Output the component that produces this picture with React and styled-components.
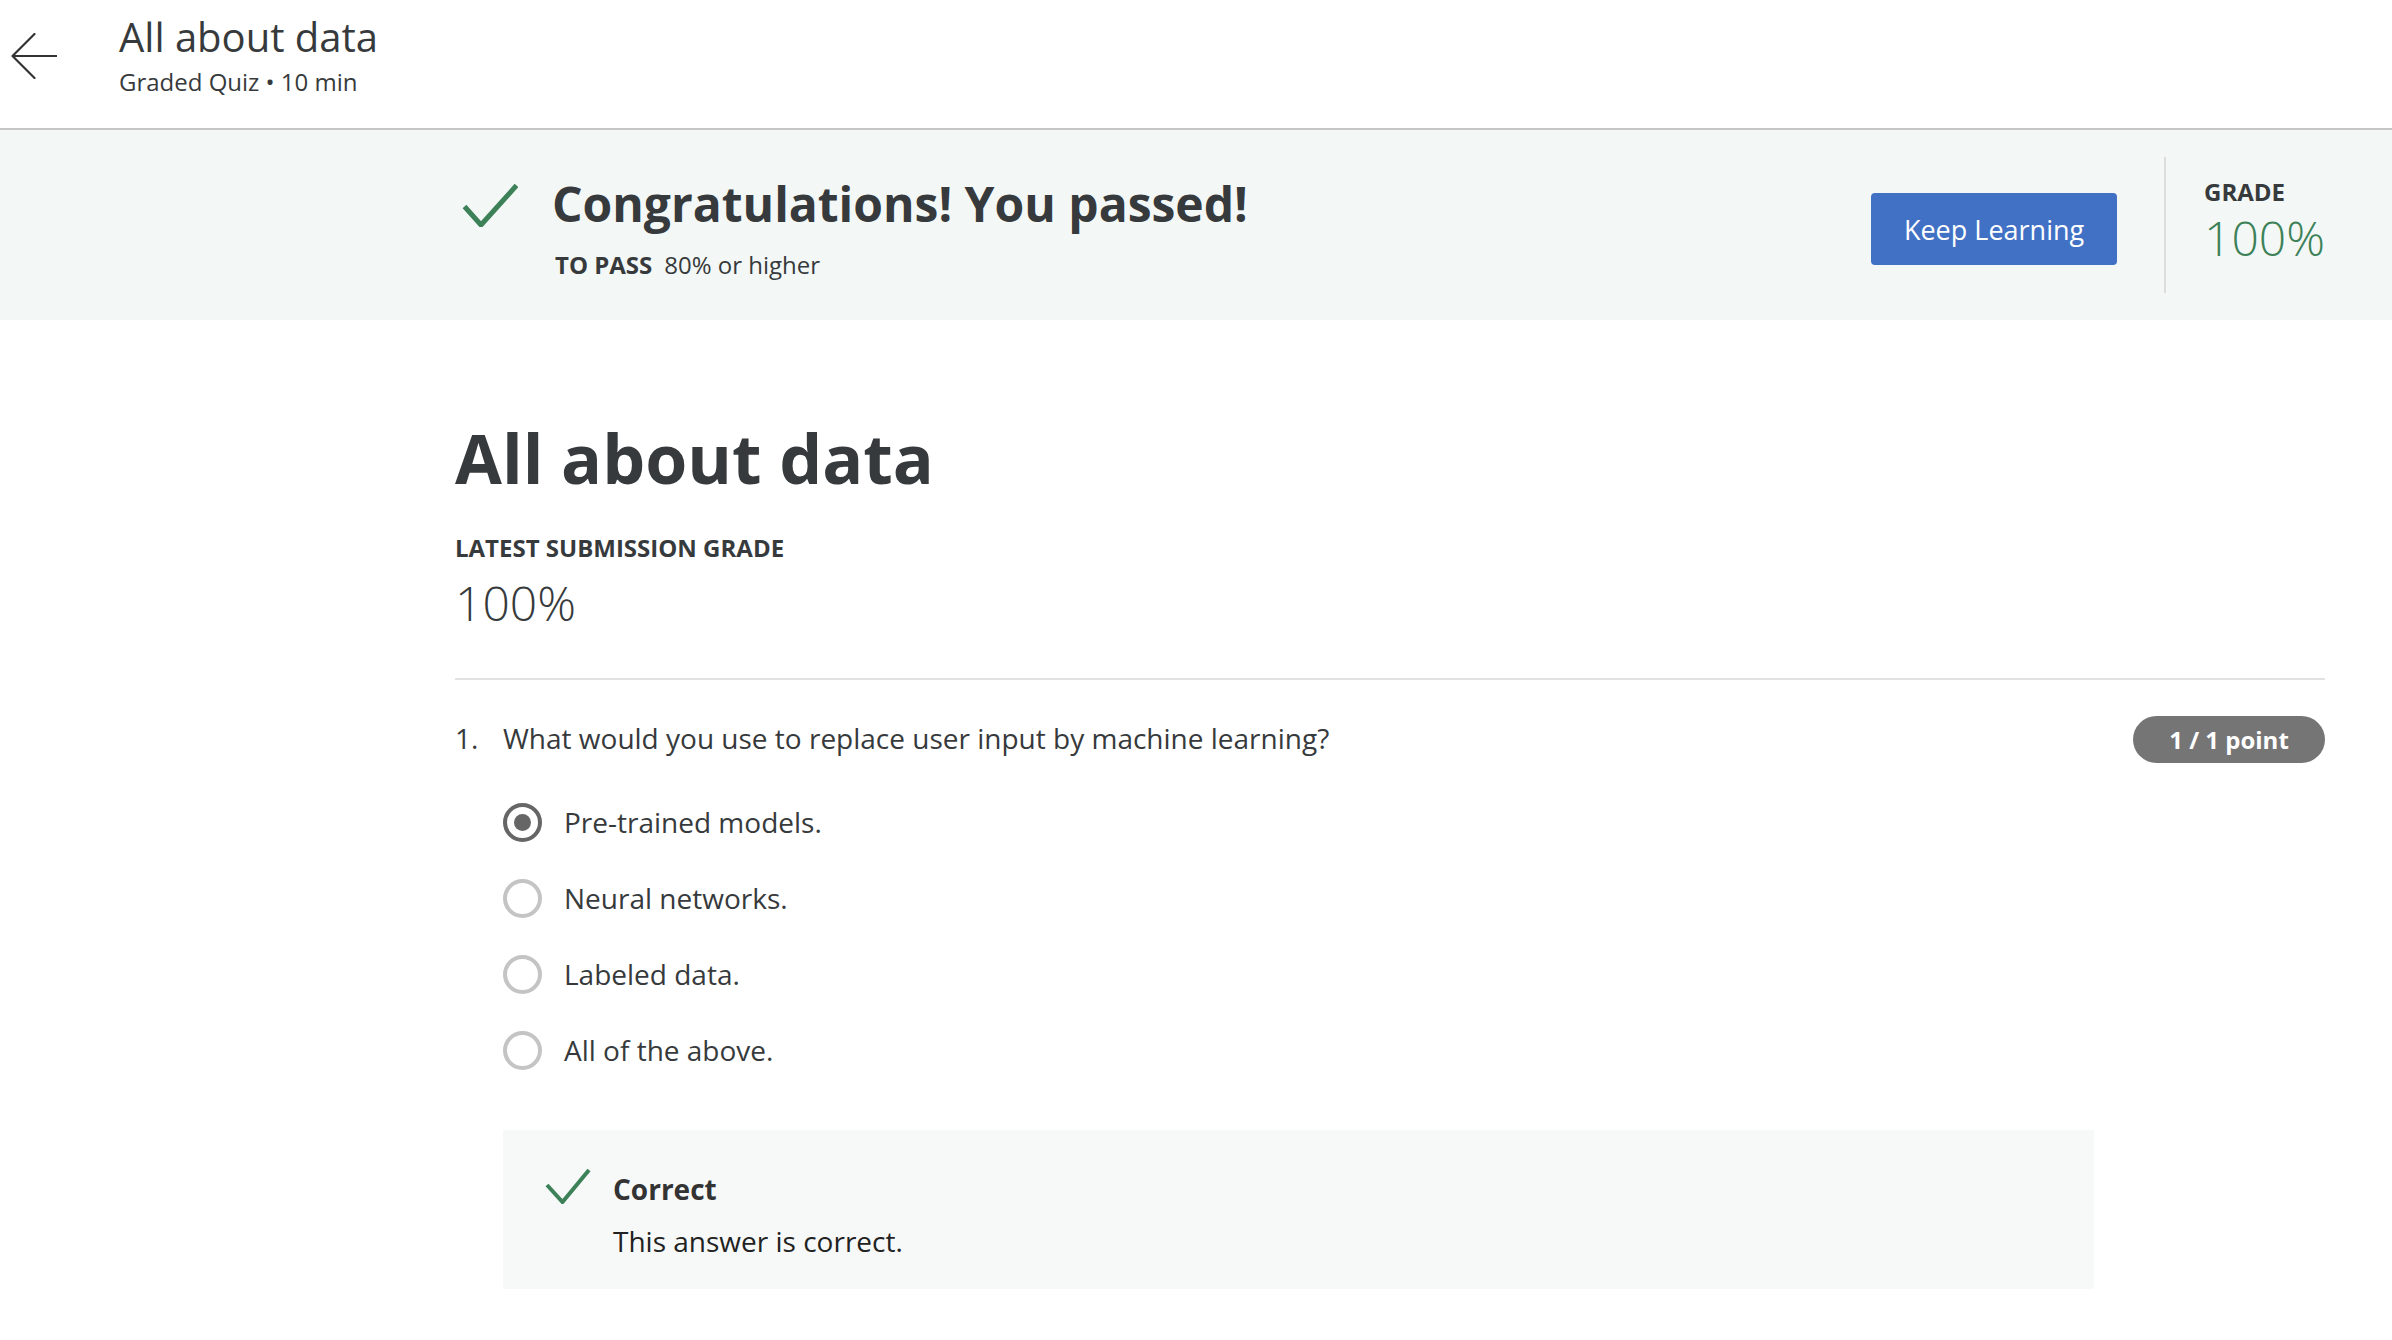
import React from "react";
import styled, { createGlobalStyle } from "styled-components";

const GlobalStyle = createGlobalStyle`
  html, body {
    margin: 0;
    padding: 0;
    background: #ffffff;
  }
  body {
    font-family: "Open Sans", "Noto Sans", "Liberation Sans", sans-serif;
    color: #373a3c;
    -webkit-font-smoothing: antialiased;
  }
  * { box-sizing: border-box; }
`;

const Page = styled.div`
  width: 100%;
  min-height: 1340px;
  background: #fff;
`;

const Header = styled.header`
  height: 130px;
  display: flex;
  align-items: flex-start;
  padding-left: 11px;
  border-bottom: 2px solid #c6c6c6;
`;

const BackButton = styled.button`
  margin-top: 33px;
  width: 46px;
  height: 46px;
  padding: 0;
  border: none;
  background: transparent;
  display: flex;
  cursor: pointer;
`;

const HeaderText = styled.div`
  margin-left: 62px;
  padding-top: 13px;
  display: flex;
  flex-direction: column;
`;

const HeaderTitle = styled.div`
  font-size: 40px;
  line-height: 48px;
  font-weight: 400;
  color: #373a3c;
`;

const HeaderSub = styled.div`
  margin-top: 5px;
  font-size: 24px;
  line-height: 32px;
  color: #373a3c;
`;

const Banner = styled.section`
  height: 190px;
  background: #f3f8f6;
  display: flex;
  align-items: center;
  justify-content: space-between;
  padding: 0 67px 0 455px;
`;

const BannerLeft = styled.div`
  display: flex;
  align-items: flex-start;
`;

const BigCheck = styled.svg`
  margin-top: 13px;
  margin-left: 7px;
  flex: none;
`;

const BannerText = styled.div`
  margin-left: 34px;
  display: flex;
  flex-direction: column;
  padding-top: 4px;
`;

const BannerTitle = styled.div`
  font-size: 48px;
  line-height: 60px;
  font-weight: 700;
  color: #373a3c;
`;

const PassLine = styled.div`
  margin-top: 15px;
  padding-left: 3px;
  font-size: 24px;
  line-height: 32px;
  color: #373a3c;
  display: flex;
  gap: 12px;
`;

const PassLabel = styled.span`
  font-weight: 700;
`;

const BannerRight = styled.div`
  display: flex;
  align-items: center;
`;

const PrimaryButton = styled.button`
  width: 246px;
  height: 72px;
  margin-top: 8px;
  border: none;
  border-radius: 4px;
  background: #4171c5;
  color: #fff;
  font-family: inherit;
  font-size: 27px;
  font-weight: 400;
  cursor: pointer;
`;

const VDivider = styled.div`
  width: 2px;
  height: 136px;
  background: #dcdcdc;
  margin: 0 38px 0 47px;
`;

const GradeBlock = styled.div`
  display: flex;
  flex-direction: column;
  margin-top: -6px;
`;

const SmallCaps = styled.div`
  font-size: 24px;
  line-height: 28px;
  font-weight: 700;
  color: #373a3c;
`;

const BigPercent = styled.div`
  margin-top: ${(p) => p.$mt || "2px"};
  font-size: 48px;
  line-height: ${(p) => p.$lh || "56px"};
  font-weight: 300;
  color: ${(p) => p.$color || "#373a3c"};
`;

const Content = styled.main`
  padding: 94px 67px 0 455px;
`;

const PageTitle = styled.h1`
  margin: 0;
  font-size: 68px;
  line-height: 88px;
  font-weight: 700;
  color: #373a3c;
`;

const SubmissionLabel = styled(SmallCaps)`
  margin-top: 32px;
`;

const Rule = styled.hr`
  margin: 45px 0 0;
  border: none;
  height: 2px;
  background: #e2e2e2;
`;

const QuestionRow = styled.div`
  margin-top: 36px;
  display: flex;
  align-items: center;
  min-height: 47px;
`;

const QNum = styled.div`
  width: 48px;
  flex: none;
  font-size: 28px;
  line-height: 36px;
  margin-top: -4px;
`;

const QText = styled.div`
  flex: 1;
  font-size: 28px;
  line-height: 36px;
  color: #373a3c;
  margin-top: -4px;
`;

const PointPill = styled.div`
  flex: none;
  width: 192px;
  height: 47px;
  border-radius: 24px;
  background: #757575;
  color: #fff;
  font-size: 24px;
  font-weight: 700;
  display: flex;
  align-items: center;
  justify-content: center;
`;

const Options = styled.div`
  margin: 21px 0 0 48px;
  display: flex;
  flex-direction: column;
`;

const OptionRow = styled.label`
  height: 76px;
  display: flex;
  align-items: center;
`;

const Radio = styled.span`
  width: 39px;
  height: 39px;
  flex: none;
  border-radius: 50%;
  border: 4px solid ${(p) => (p.$checked ? "#666666" : "#c4c4c4")};
  display: flex;
  align-items: center;
  justify-content: center;
  &::after {
    content: "";
    display: ${(p) => (p.$checked ? "block" : "none")};
    width: 17px;
    height: 17px;
    border-radius: 50%;
    background: #666666;
  }
`;

const OptionLabel = styled.span`
  margin-left: 22px;
  font-size: 28px;
  line-height: 36px;
  color: #373a3c;
`;

const Feedback = styled.div`
  margin: 42px 231px 0 48px;
  background: #f7f9f9;
  padding: 41px 42px 30px;
  display: flex;
  align-items: flex-start;
`;

const SmallCheck = styled.svg`
  flex: none;
  margin-top: -3px;
`;

const FeedbackBody = styled.div`
  margin-left: 22px;
  display: flex;
  flex-direction: column;
`;

const FeedbackTitle = styled.div`
  font-size: 28px;
  line-height: 36px;
  font-weight: 700;
  color: #333;
`;

const FeedbackText = styled.div`
  margin-top: 16px;
  font-size: 28px;
  line-height: 36px;
  color: #222;
`;

const options = [
  { label: "Pre-trained models.", checked: true },
  { label: "Neural networks.", checked: false },
  { label: "Labeled data.", checked: false },
  { label: "All of the above.", checked: false },
];

export default function App() {
  return (
    <Page>
      <GlobalStyle />
      <Header>
        <BackButton aria-label="Back">
          <svg width="46" height="46" viewBox="0 0 46 46" fill="none">
            <path
              d="M46 23H1.5M23.5 1L1.5 23L23.5 45"
              stroke="#333"
              strokeWidth="2.2"
              strokeLinecap="round"
              strokeLinejoin="round"
            />
          </svg>
        </BackButton>
        <HeaderText>
          <HeaderTitle>All about data</HeaderTitle>
          <HeaderSub>Graded Quiz • 10 min</HeaderSub>
        </HeaderText>
      </Header>

      <Banner>
        <BannerLeft>
          <BigCheck width="56" height="44" viewBox="0 0 56 44" fill="none">
            <path
              d="M2.5 23.5L19 42L54.5 2.5"
              stroke="#3d8159"
              strokeWidth="5"
              strokeLinejoin="miter"
            />
          </BigCheck>
          <BannerText>
            <BannerTitle>Congratulations! You passed!</BannerTitle>
            <PassLine>
              <PassLabel>TO PASS</PassLabel>
              <span>80% or higher</span>
            </PassLine>
          </BannerText>
        </BannerLeft>
        <BannerRight>
          <PrimaryButton>Keep Learning</PrimaryButton>
          <VDivider />
          <GradeBlock>
            <SmallCaps>GRADE</SmallCaps>
            <BigPercent $color="#3d8159" $mt="4px">100%</BigPercent>
          </GradeBlock>
        </BannerRight>
      </Banner>

      <Content>
        <PageTitle>All about data</PageTitle>
        <SubmissionLabel>LATEST SUBMISSION GRADE</SubmissionLabel>
        <BigPercent $lh="60px" $mt="11px">100%</BigPercent>
        <Rule />
        <QuestionRow>
          <QNum>1.</QNum>
          <QText>What would you use to replace user input by machine learning?</QText>
          <PointPill>1 / 1 point</PointPill>
        </QuestionRow>
        <Options>
          {options.map((o) => (
            <OptionRow key={o.label}>
              <Radio $checked={o.checked} />
              <OptionLabel>{o.label}</OptionLabel>
            </OptionRow>
          ))}
        </Options>
        <Feedback>
          <SmallCheck width="46" height="36" viewBox="0 0 46 36" fill="none">
            <path
              d="M2 17L17.5 34L44 2"
              stroke="#3d8159"
              strokeWidth="4"
            />
          </SmallCheck>
          <FeedbackBody>
            <FeedbackTitle>Correct</FeedbackTitle>
            <FeedbackText>This answer is correct.</FeedbackText>
          </FeedbackBody>
        </Feedback>
      </Content>
    </Page>
  );
}
